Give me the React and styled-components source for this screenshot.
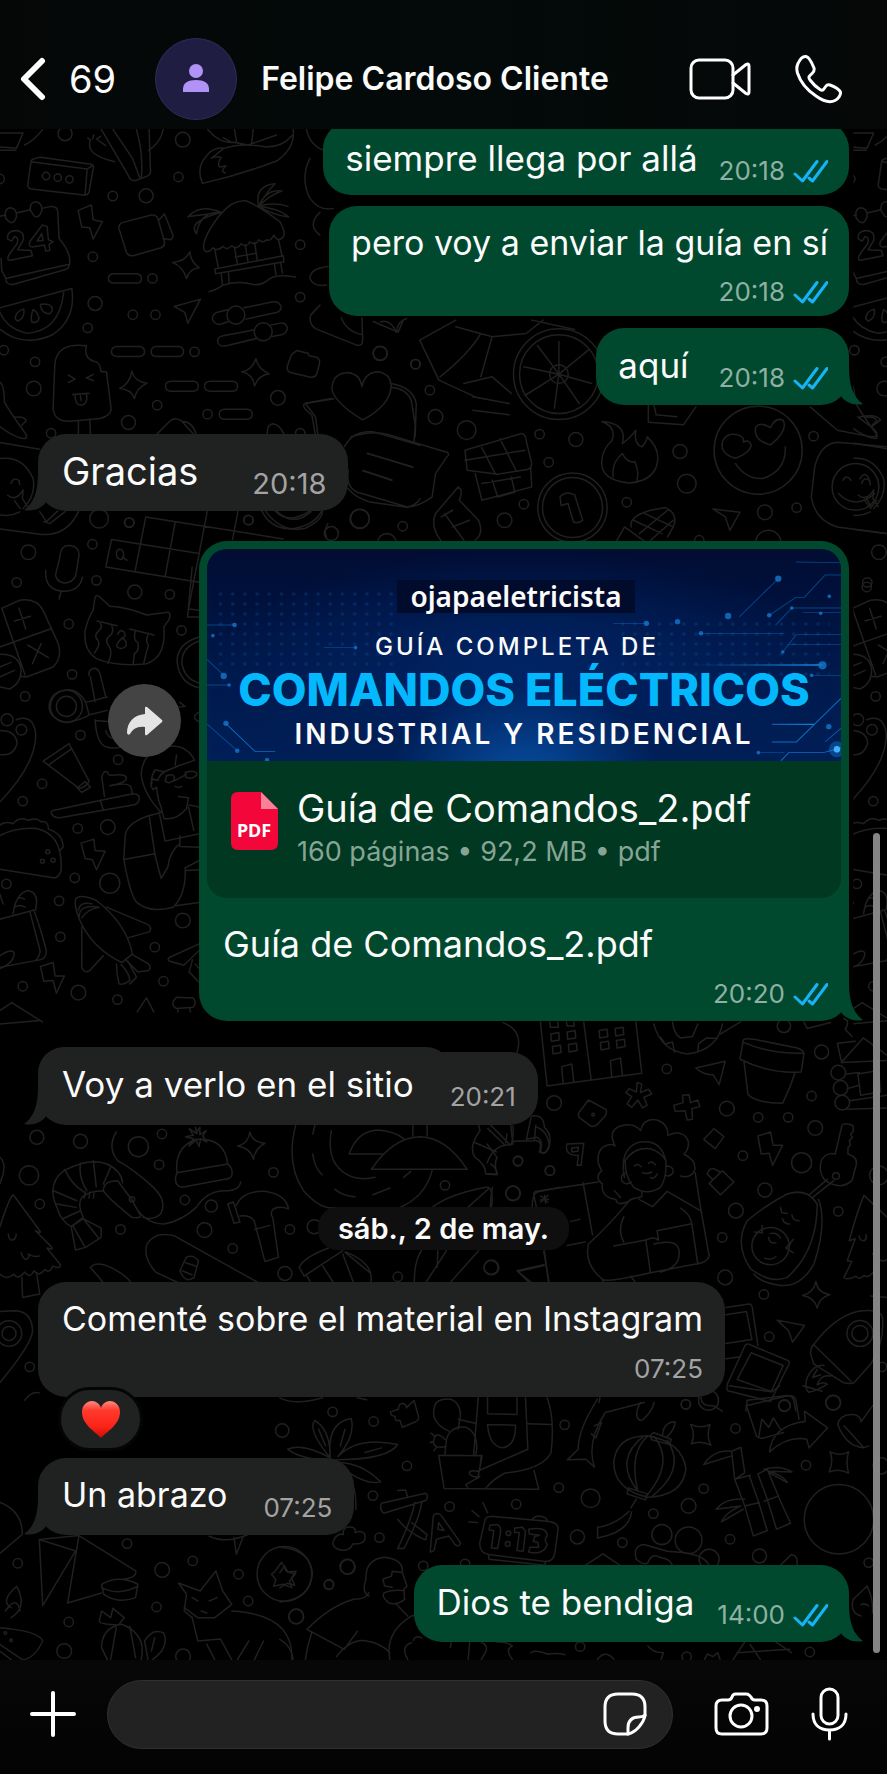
import React from "react";
import styled, { createGlobalStyle, css } from "styled-components";

const GlobalStyle = createGlobalStyle`
  * { box-sizing: border-box; }
  body { margin: 0; background: #000; }
  button, input { font: inherit; color: inherit; }
`;

const SENT = "#00492f";
const RECEIVED = "#202121";

const App_ = styled.div`
  min-height: 100vh;
  display: flex;
  flex-direction: column;
  background: #000;
  color: #fbfbfb;
  font-family: Inter, "Liberation Sans", sans-serif;
`;

/* ---------- header ---------- */
const Header = styled.header`
  height: 129px;
  padding: 29px 44px 0 20px;
  display: flex;
  align-items: center;
  background: linear-gradient(90deg, #050707, #030a09 50%, #060808);
`;
const IconButton = styled.button`
  display: flex;
  align-items: center;
  padding: 0;
  border: 0;
  background: none;
  cursor: pointer;
  flex: none;
`;
const BackButton = styled(IconButton)`
  gap: 23px;
  font-size: 38px;
  line-height: 44px;
`;
const Avatar = styled.div`
  flex: none;
  width: 82px;
  height: 82px;
  margin-left: 39px;
  border-radius: 50%;
  border: 1px solid #302b5a;
  background: #201d43;
`;
const ContactName = styled.h1`
  flex: 1;
  min-width: 0;
  margin: 0 0 0 24px;
  font-size: 32px;
  line-height: 40px;
  font-weight: 600;
  white-space: nowrap;
`;
const HeaderActions = styled.div`
  display: flex;
  align-items: center;
  gap: 43px;
`;

/* ---------- conversation ---------- */
const Chat = styled.main`
  position: relative;
  flex: 1;
  overflow: hidden;
  padding: 0 38px 18px;
  display: flex;
  flex-direction: column;
`;
const WallpaperSvg = styled.svg`
  position: absolute;
  inset: 0;
  width: 100%;
  height: 100%;
  fill: none;
  stroke: #20201f;
  stroke-width: 1.5px;
  stroke-linecap: round;
  stroke-linejoin: round;
  & path, & circle { vector-effect: non-scaling-stroke; }
`;
const Scrollbar = styled.div`
  position: absolute;
  right: 7px;
  top: 46%;
  bottom: 7px;
  width: 7px;
  border-radius: 4px;
  background: #858585;
`;
const Row = styled.div`
  position: relative;
  display: flex;
  align-items: flex-start;
  justify-content: ${(p) => (p.$sent ? "flex-end" : "flex-start")};
  margin-top: ${(p) => p.$top}px;
`;
const Bubble = styled.article`
  position: relative;
  display: flex;
  flex-direction: ${(p) => (p.$stacked ? "column" : "row")};
  gap: ${(p) => p.$gap}px;
  padding: ${(p) => (p.$raised ? 10 : 15)}px ${(p) => (p.$sent ? 21 : 22)}px ${(p) => p.$bottom || 13}px ${(p) => (p.$sent ? 22 : 24)}px;
  border-radius: 28px;
  background: ${(p) => (p.$sent ? SENT : RECEIVED)};
  ${(p) =>
    p.$raised &&
    css`
      &::before {
        content: "";
        position: absolute;
        left: 0;
        right: 86px;
        top: -5px;
        height: 52px;
        border-radius: 28px;
        background: ${RECEIVED};
      }
    `}
`;
const Text = styled.p`
  position: relative;
  margin: 0;
  padding-bottom: ${(p) => (p.$stacked ? 0 : 5)}px;
  font-size: ${(p) => p.$size || 35}px;
  line-height: 44px;
  white-space: nowrap;
`;
const Meta = styled.div`
  position: relative;
  align-self: flex-end;
  display: flex;
  align-items: center;
  gap: 8px;
  font-size: ${(p) => (p.$large ? 29 : 26)}px;
  line-height: 28px;
  color: ${(p) => (p.$sent ? "#8fb0a2" : "#a3a3a3")};
`;
const TailSvg = styled.svg`
  position: absolute;
  bottom: 0;
  ${(p) => (p.$sent ? "right: -14px;" : "left: -14px; transform: scaleX(-1);")}
  fill: ${(p) => (p.$sent ? SENT : RECEIVED)};
`;
const DateDivider = styled.div`
  position: relative;
  align-self: center;
  margin-top: 82px;
  padding: 0 20px;
  border-radius: 20px;
  background: #0f0f0f;
  font-size: 29px;
  line-height: 43px;
  font-weight: 600;
`;
const Reaction = styled.div`
  position: absolute;
  left: 20px;
  bottom: -54px;
  display: flex;
  align-items: center;
  justify-content: center;
  width: 85px;
  height: 64px;
  border: 3px solid #050505;
  border-radius: 32px;
  background: #202222;
`;

/* ---------- document card ---------- */
const ForwardButton = styled.button`
  flex: none;
  display: flex;
  align-items: center;
  justify-content: center;
  width: 73px;
  height: 73px;
  margin: 143px 18px 0 0;
  padding: 0;
  border: 0;
  border-radius: 50%;
  background: #444;
`;
const Card = styled.article`
  position: relative;
  flex: 0 1 650px;
  padding: 8px 8px 13px;
  border-radius: 28px;
  background: ${SENT};
`;
const Attachment = styled.a`
  display: block;
  overflow: hidden;
  border-radius: 20px;
  background: #003822;
  color: inherit;
  text-decoration: none;
`;
const Banner = styled.div`
  position: relative;
  display: flex;
  flex-direction: column;
  align-items: center;
  height: 212px;
  padding-top: 31px;
  background:
    radial-gradient(ellipse at 50% 110%, #0750a5 0, transparent 30%),
    radial-gradient(ellipse at 50% 55%, #022566 0, transparent 70%),
    linear-gradient(#010c32, #011a4c 60%, #012057);
  white-space: nowrap;
`;
const CircuitSvg = styled.svg`
  position: absolute;
  inset: 0;
  width: 100%;
  height: 100%;
`;
const Handle = styled.div`
  position: relative;
  margin-right: 16px;
  padding: 0 13px;
  background: #010b2b;
  font: 600 28px/33px "Noto Sans", "Open Sans", sans-serif;
`;
const Kicker = styled.div`
  position: relative;
  margin: 20px 14px 0 0;
  font-size: 24px;
  line-height: 28px;
  font-weight: 500;
  letter-spacing: 3px;
`;
const BannerTitle = styled.div`
  position: relative;
  margin-top: 7px;
  font-size: 45px;
  line-height: 44px;
  font-weight: 800;
  color: #04b8fd;
`;
const BannerSubtitle = styled.div`
  position: relative;
  margin-top: 7px;
  font-size: 28px;
  line-height: 30px;
  font-weight: 600;
  letter-spacing: 3px;
`;
const FileInfo = styled.div`
  display: flex;
  gap: 19px;
  height: 137px;
  padding: 25px 24px 0;
`;
const FileIcon = styled.svg`
  flex: none;
  margin-top: 6px;
`;
const FileName = styled.div`
  font-size: 38px;
  line-height: 44px;
  white-space: nowrap;
`;
const FileDetails = styled.div`
  margin-top: 6px;
  font-size: 27px;
  line-height: 32px;
  color: #86a595;
  white-space: nowrap;
`;
const Caption = styled.div`
  display: flex;
  flex-direction: column;
  gap: 14px;
  padding: 24px 13px 0 16px;
`;

/* ---------- composer ---------- */
const Composer = styled.form`
  display: flex;
  align-items: center;
  height: 115px;
  padding: 0 39px 7px 30px;
  background: linear-gradient(#070707, #030303);
`;
const Field = styled.div`
  flex: 1;
  min-width: 0;
  display: flex;
  align-items: center;
  height: 69px;
  margin: 0 41px 0 31px;
  padding: 0 25px 0 30px;
  border: 1px solid #303030;
  border-radius: 35px;
  background: #222;
`;
const MessageInput = styled.input`
  flex: 1;
  min-width: 0;
  height: 44px;
  border: 0;
  outline: 0;
  background: none;
  font-size: 34px;
`;
const ComposerActions = styled.div`
  display: flex;
  align-items: center;
  gap: 42px;
`;

/* ---------- small drawings ---------- */
const Line = ({ w, h, sw = 3, children, ...rest }) => (
  <svg width={w} height={h} viewBox={`0 0 ${w} ${h}`} fill="none" stroke="#fff" strokeWidth={sw}
    strokeLinecap="round" strokeLinejoin="round" aria-hidden="true" {...rest}>
    {children}
  </svg>
);

const Checks = () => (
  <Line w={35} h={24} stroke="#16b3f6" role="img" aria-label="Leído" aria-hidden={undefined}>
    <path d="M2 15L9.500 22L24 2.500M16 19L19.500 22L34 2.500" />
  </Line>
);

const Tail = ({ sent }) => (
  <TailSvg $sent={sent} width="25" height="38" viewBox="0 0 25 38" aria-hidden="true">
    <path d="M0 22L11 0C11 18 15 30 25 37C15 39 8 35 3.500 30Z" />
  </TailSvg>
);

const Message = ({ text, time, sent, top, gap, stacked, size, large, tail, bottom, raised, children }) => (
  <Row $sent={sent} $top={top}>
    <Bubble $sent={sent} $gap={gap} $stacked={stacked} $bottom={bottom} $raised={raised}>
      {tail && <Tail sent={sent} />}
      <Text $stacked={stacked} $size={size}>{text}</Text>
      <Meta $sent={sent} $large={large}>
        <time>{time}</time>
        {sent && <Checks />}
      </Meta>
      {children}
    </Bubble>
  </Row>
);

/* A patch of wallpaper doodles with its own origin and drawing scale. */
const Patch = ({ x, y, sx = 3, sy = 3, d, dots = [] }) => (
  <g>
    <path transform={`translate(${x} ${y}) scale(${1 / sx} ${1 / sy})`} d={d} />
    {dots.map(([cx, cy, r], i) => (
      <circle key={i} cx={x + cx / sx} cy={y + cy / sy} r={r / 3} />
    ))}
  </g>
);

const topLeft = {
  x: 0, y: 125,
  d: `M0 24L70 24L50 70L0 66M0 76L48 76M75 60Q105 45 128 14
  M94 110Q92 102 122 97L270 117Q284 120 280 132L268 200Q264 212 250 210L95 192Q82 189 84 178ZM94 110L262 132L280 120M262 132L256 210
  M305 14L385 150Q392 172 412 165L440 154Q454 150 452 138L448 14M340 14L398 100L420 158M410 14Q430 80 425 156M272 46Q255 90 345 110M272 46L264 38M278 42L282 30M290 42L302 34M290 42L318 62M446 76Q482 54 490 14
  M624 14Q660 56 700 52L745 60L830 30M880 14Q886 70 830 108Q720 150 608 175Q588 130 618 95Q640 65 672 70Q650 88 634 100Q650 92 664 98Q650 118 660 126L678 122Q660 140 676 144M672 70Q730 52 800 66Q850 64 876 32M670 38L695 52M710 50L704 14M760 14L755 58
  M0 274L18 270M50 264L92 254M126 250L155 244Q174 244 174 260L178 340Q212 380 210 410Q210 430 195 434L40 478Q18 480 18 460L6 436L4 400M18 460L205 418M18 280Q12 250 32 248Q52 250 50 276Q42 300 28 290ZM92 256Q90 230 108 230Q128 232 126 258Q118 280 104 274Z
  M24 342Q20 318 48 316Q76 318 70 346L54 374L94 376L98 392L28 406Q20 402 30 386L52 356Q58 336 44 334L36 348ZM128 300L90 350Q86 366 98 366L134 360L138 378L150 376L148 358L160 350L146 344L142 304ZM126 326L112 348L130 346Z
  M235 256L275 240L280 284L308 290L280 342L270 308L246 306Z
  M358 312Q354 298 370 292L455 270Q468 268 474 280L494 350Q496 362 484 368L400 392Q386 394 380 382ZM478 284L494 266L520 332L514 344L490 340
  M0 548L216 490Q230 580 160 628Q70 670 0 612M0 560Q20 610 80 624Q180 620 192 500M46 580Q50 556 72 552Q76 580 54 588ZM100 554Q90 580 98 592Q116 594 118 578Q110 556 100 554ZM122 538Q124 566 150 566Q166 552 150 540Q134 534 122 538Z
  M564 276Q600 235 664 262Q600 260 590 326Q560 290 664 262M566 274Q600 270 664 262M612 372Q606 340 660 270Q700 222 740 228Q780 244 840 290Q862 330 846 340Q830 350 822 330Q812 350 800 344Q790 356 776 344Q768 364 750 350Q740 370 724 356Q710 376 696 362Q680 378 670 364Q650 380 640 368Q620 390 612 372M776 244Q764 180 826 176Q800 200 776 244Q800 190 846 198Q810 210 776 244Q820 230 864 244M776 244Q840 250 866 276Q820 270 776 244
  M645 375L655 425M836 344L846 392M704 368L712 414M764 352L772 404M706 396L770 384M736 360L744 408M645 432L850 392L852 410L647 446ZM664 446L668 480M686 444L688 476M824 418L828 448M842 414L848 444M628 500Q650 494 670 480Q710 466 750 476Q780 486 808 462Q830 446 886 456
  M340 446L410 446Q425 448 425 460Q425 474 410 474L340 474Q326 472 326 460Q326 448 340 446ZM350 664L420 664Q434 666 434 680Q434 692 420 694L350 694Q335 692 335 680Q335 666 350 664ZM468 664L538 664Q551 666 551 680Q551 692 538 694L468 694Q454 692 454 680Q454 666 468 664ZM512 768L582 768Q595 770 595 783Q595 796 582 798L512 798Q497 796 497 783Q497 770 512 768ZM630 768L700 768Q713 770 713 783Q713 796 700 798L630 798Q614 796 614 783Q614 770 630 768ZM672 852L744 852Q757 854 757 867Q757 880 744 882L672 882Q658 880 658 867Q658 854 672 852Z
  M570 380Q572 410 598 428Q570 430 560 460Q550 425 518 412Q556 410 570 380ZM396 738Q404 770 442 774Q410 788 404 820Q394 792 360 790Q392 774 396 738ZM768 700Q774 732 808 746Q776 750 764 782Q758 746 726 740Q758 734 768 700Z
  M523 544L602 522L564 594L555 562ZM684 554L650 562Q636 570 638 584Q644 598 660 598L684 590M732 548L820 530Q838 528 844 546Q844 558 830 562L738 582M764 614L670 632Q650 636 654 652Q660 666 680 662L770 640M812 600L842 594Q858 592 862 608Q862 622 848 628L816 634
  M260 662Q170 650 165 720L160 850Q164 890 210 888L300 880Q334 872 334 850L320 740L304 740Q300 710 286 710Q250 700 260 662M236 888L236 928M270 884L272 928M206 750L226 762L206 772M280 748L260 758L280 766M218 808L268 804M226 808Q226 842 246 840Q266 834 260 806M242 812L244 826
  M862 724L874 690L890 676L924 684L928 692L950 696Q962 704 958 718L950 748Q944 758 932 756L872 742Q860 738 862 724Z
  M1088 884Q1000 830 996 790Q998 744 1044 742Q1080 746 1086 784Q1096 740 1136 740Q1170 746 1174 780Q1172 840 1088 884M996 820L916 834Q906 838 916 852L936 870L946 926M1174 786Q1220 790 1234 826L1246 900L1242 950M1034 964Q1060 914 1120 920L1260 960M1044 1090Q1070 1120 1110 1130L1220 1146Q1250 1140 1260 1120M1102 984L1238 1026M1090 1036L1176 1064
  M472 926L512 886Q528 874 546 888Q580 890 588 926M544 886L580 926M802 926Q802 896 820 896Q840 900 852 926M0 770Q14 780 14 830Q30 860 78 926Q84 938 76 940Q50 940 0 904M46 876Q72 872 80 886L66 900M0 952L120 972M0 1000Q70 990 100 1060Q110 1110 70 1150M0 1168Q30 1176 60 1160M34 1074Q40 1054 58 1066L60 1078M24 1110Q50 1130 70 1094L68 1120L84 1144M44 1126L62 1150
  M932 570L960 540M932 570Q926 600 950 612L1070 660Q1090 664 1088 640L1086 578M1024 578Q1040 620 1086 628M1142 590Q1170 580 1190 622Q1190 590 1220 580M920 14Q930 66 984 80M930 100Q900 160 930 220Q960 260 1000 250M960 262Q920 300 960 330M984 424Q930 430 930 460Q940 486 980 480`,
  dots: [[549,44,22],[536,156,14],[439,212,21],[339,213,14],[279,395,14],[286,535,21],[264,608,14],[399,569,14],[467,569,14],[458,460,14],[584,680,14],[106,710,14],[102,790,22],[12,675,14],[472,840,14],[386,892,21],[834,818,22],[623,867,14],[154,924,14],[901,359,14],[901,516,14],[1141,684,21],[1246,717,14],[901,924,14],[745,1184,14],[1080,1180,28],[389,1192,14],[298,1180,28],[196,26,21],[0,162,14],[139,153,11],[174,158,11],[209,163,11],[708,570,27],[790,620,27]],
};

const middleLeft = {
  x: 0, y: 510,
  d: `M0 56L120 72Q200 80 236 4M120 4L140 34L174 2M132 34L150 40L196 4
  M176 160L184 120Q192 104 212 106Q238 110 238 134L228 196Q216 220 192 218Q166 212 168 190ZM138 180Q134 240 190 243Q240 244 248 200M184 244L178 266
  M335 88L598 130M335 88L318 170L598 216M438 20L406 182M526 36L496 198M622 4L566 296L598 300M714 4L698 88M438 20L850 86M350 130Q350 114 366 118Q376 130 368 146Q350 150 350 130M368 140L382 150
  M786 2Q810 54 870 56Q940 50 966 2M826 2Q866 44 930 2M984 40Q970 60 980 80
  M286 260Q290 252 300 260L330 288Q380 290 440 314L505 306Q516 310 506 330L492 350Q500 440 440 460Q350 470 290 445Q250 420 256 360Q266 320 280 300ZM292 332L352 346M302 340Q310 350 298 360Q280 376 294 390Q304 400 284 428M336 346Q344 366 330 376Q312 390 328 408Q340 426 324 460M354 372Q360 356 372 364Q382 380 366 384Q348 400 352 410Q366 420 378 408Q384 390 366 384M390 356L462 374M406 362Q400 390 414 396Q420 420 404 430L400 462M444 374Q436 396 446 404Q438 430 432 458
  M6 294L60 270Q110 262 130 300L174 396Q190 440 160 470L80 500L64 498M6 294L76 494M0 410L152 356M44 332L92 318M58 294L78 356M84 404L146 442M124 400L98 460M0 432Q60 430 64 480Q64 520 30 536L0 530M0 470L34 456M0 500L44 480
  M148 590Q150 540 210 538Q240 542 258 576L322 560M266 614L322 600M258 576L268 614Q240 630 200 636Q150 626 148 590M268 496Q264 476 286 474Q298 476 302 496L318 560M272 500L286 574M286 628Q290 700 320 710Q350 718 380 704M286 630L330 634M318 660Q324 690 360 684M598 380Q530 400 532 456Q540 520 598 532M598 392Q546 410 546 456Q552 505 598 518M540 576L556 588L540 590M598 605Q570 620 598 634
  M0 660Q50 660 52 700Q40 740 0 732M0 875Q110 760 108 670Q100 610 50 628
  M130 752L208 700L268 812Q260 830 238 834L146 764ZM146 764L214 716M232 832L256 814L272 830L246 846ZM160 900L300 870L400 850Q420 850 418 866Q416 880 400 884L180 922Q158 922 154 906Q156 900 160 900M302 870L310 898M314 858L306 800Q310 780 322 784Q324 798 344 794Q380 790 380 804Q378 818 330 826Q390 814 394 832L398 850
  M584 750Q560 700 500 708Q430 720 424 790Q430 850 484 906M584 750L536 766Q520 774 492 784L466 778M530 734L526 764M496 784Q480 790 474 810L460 806Q446 820 460 838L470 830Q474 870 484 890L492 924Q530 930 560 894L566 862L536 858M522 812L560 792M500 796Q524 786 524 806Q510 824 496 812ZM556 786Q586 776 592 792Q576 810 558 800ZM526 828Q536 834 546 828M466 778Q452 800 456 820
  M484 906L446 916Q376 940 376 980L372 1046Q390 1150 410 1175Q450 1210 520 1190Q560 1150 556 1072L598 1050M376 1046L466 1030M448 916L466 1036L484 1104L504 1070Q510 1020 540 1000M478 906L496 992L598 970M540 976L540 1008L598 1010M566 890L582 960M528 1186L598 1176M568 884L598 890M560 1080L598 1078
  M0 975Q50 950 110 954Q190 970 184 1080Q176 1104 160 1102L0 1076M0 944Q16 930 40 940Q60 916 86 930Q110 920 124 934Q146 930 146 956Q190 970 190 1010L180 1020
  M244 998L282 986L286 1020L316 1022L290 1078L278 1048L256 1044ZM122 1368L160 1356L166 1396L194 1396L170 1448L160 1410L132 1412Z
  M0 1226L90 1202L102 1198Q128 1270 140 1322Q138 1346 120 1348L0 1370M90 1202L120 1316Q124 1330 108 1350M40 1210Q48 1150 84 1140Q114 1144 110 1180L108 1198M44 1190Q60 1180 76 1190M54 1164Q66 1158 74 1166M0 1150L10 1180M0 1336Q40 1310 44 1330Q40 1360 0 1374
  M250 1250Q220 1190 228 1164Q244 1150 290 1170Q380 1240 398 1330L366 1356Q290 1320 250 1250M238 1222Q236 1180 298 1190Q262 1196 246 1222M236 1200Q240 1172 276 1180M320 1190L440 1240Q460 1250 448 1264L384 1282M246 1250L246 1370Q252 1390 270 1380L310 1336M398 1332L446 1360Q456 1370 446 1380L414 1384L376 1346M364 1362Q390 1390 390 1410Q370 1424 358 1420Q350 1390 350 1360M384 1352L410 1400L390 1420
  M598 1300L510 1340Q500 1348 510 1352L552 1364L598 1320M578 1348L568 1384L598 1416M586 1360L620 1400L608 1420M0 1500L36 1476L128 1534M0 1540L120 1530M412 1504L440 1462L462 1504M530 1460L580 1462Q592 1476 580 1490L530 1494Q508 1480 530 1460M534 1494L534 1504M570 1494L572 1504M630 1504Q650 1460 690 1432M726 1452Q820 1410 914 1452M762 1502Q820 1460 876 1502M960 1432Q990 1450 990 1500`,
  dots: [[86,126,22],[278,102,14],[388,37,14],[290,210,14],[51,216,14],[405,245,21],[510,252,14],[207,341,14],[545,360,14],[217,492,14],[76,558,14],[242,674,14],[355,748,14],[127,820,14],[69,872,14],[234,954,14],[324,950,22],[225,1102,14],[330,1118,30],[178,1171,14],[20,1120,14],[182,1279,14],[465,1310,14],[549,1230,22],[236,1446,22],[69,1427,14],[353,1467,14],[491,1412,14],[200,588,30],[200,588,48],[22,628,18],[65,658,16],[144,1024,6],[128,1052,6],[160,1049,6]],
};

const lowerLeft = {
  x: 0, y: 1110, sx: 2.8,
  d: `M326 64Q300 110 330 150Q380 180 430 230Q470 270 450 310Q430 330 400 320M370 268Q400 340 460 340Q510 330 550 290Q580 240 630 240Q670 240 674 214
  M370 320Q300 260 290 240Q290 210 330 210L370 268L392 310Q400 324 370 320M160 290Q130 220 180 180Q250 140 300 160Q340 180 344 216M290 240Q250 240 230 260Q216 280 234 320L200 348Q170 330 160 290M182 176Q200 220 236 244M226 158Q220 200 244 240M262 150L270 228M310 170L290 220M150 240L216 270M160 280L214 290M176 324L226 300M200 348L212 418L240 410L284 380L284 352L234 324ZM204 344L238 408M234 324L278 384M240 244L236 262M252 244L250 262M264 248L262 262
  M38 252Q26 262 0 350M38 252L112 360Q118 370 100 360L146 410Q150 418 132 412L170 462Q170 476 148 466Q140 490 126 476Q110 500 96 480Q84 506 70 484Q50 510 40 490Q20 510 0 490M24 370Q26 390 36 388Q46 386 46 370M60 426Q66 446 74 446Q86 440 80 430Q96 440 110 436M62 500L64 560L112 550L104 492
  M496 186Q488 110 550 86Q630 80 638 160M496 186L638 160Q652 170 650 190Q650 204 630 206L510 230Q490 226 492 200ZM548 50L552 70L530 54L542 74L520 78L542 84L530 106L550 88L558 108L562 84L580 94L568 76L578 60L560 72L560 50L550 66Z
  M700 64Q706 94 742 98Q714 114 710 146Q704 114 666 106Q696 98 700 64ZM638 280L654 274L672 334L656 338ZM662 284Q680 240 740 242Q800 250 808 294Q780 284 764 296Q756 310 764 320L780 440L742 452L712 330Q700 312 672 316M714 356L756 344
  M828 44Q800 160 850 240Q900 300 940 290M882 44L876 70M876 130Q880 170 902 192M938 236Q960 256 994 258M1044 252L1092 232M928 60Q910 170 990 200Q1020 208 1050 200M1210 180Q1190 260 1116 292M978 130Q1000 60 1060 58Q1110 64 1130 84M978 130L1072 130M1040 176Q1100 80 1176 78Q1250 80 1308 176ZM1156 44L1156 76M1196 44L1196 76M1130 200L1150 182
  M1340 44L1344 60Q1310 110 1330 140Q1360 160 1360 190L1392 192Q1390 170 1374 160M1326 94L1390 124M1366 54L1414 104L1436 100L1430 44M1414 104Q1380 110 1364 156M1436 92L1496 90L1500 44M1500 90Q1520 90 1510 124Q1530 136 1538 100Q1530 60 1504 50
  M500 516L436 484Q400 440 412 400Q436 360 490 376L724 516M504 480L522 440Q540 430 556 450L544 500Q520 520 504 480M520 456L548 466M510 480L538 492M254 470Q270 450 310 470Q350 490 368 516M254 470L290 516
  M838 470Q850 440 920 412M838 470L852 496L960 420M860 496L870 516M904 466L934 516M960 430L990 516M970 424Q1050 460 1038 516M966 424L1036 486M1160 516Q1160 450 1180 420M1226 420L1224 470M1250 420L1192 516M1340 420L1260 516M1210 290Q1260 250 1360 230Q1384 226 1376 290M1310 290L1368 234M1490 290Q1490 250 1504 244L1568 230M1450 482L1524 464M1450 482L1482 516M1524 420L1536 516M1514 256L1534 274M1534 254L1514 274
  M0 816Q90 700 92 660Q90 600 40 600L0 602M0 140Q24 160 0 220M70 868Q90 840 110 846`,
  dots: [[104,80,21],[226,92,21],[388,108,30],[454,70,14],[446,162,14],[766,185,14],[518,268,14],[592,286,18],[652,413,14],[338,356,14],[573,358,22],[112,280,14],[82,194,29],[812,356,14],[798,488,21],[1114,498,14],[1246,224,14],[1376,470,22],[1436,248,21],[1450,152,14],[1540,180,14],[84,768,14],[26,668,21],[26,668,38],[370,266,8],[880,348,21]],
};

const lowerRight = {
  x: 487, y: 1010,
  d: `M160 34L180 226L464 188L446 34M290 34L312 206M188 34L190 50L214 50L212 34M238 34L240 46L262 46L260 34M191 70L215 66L217 88L193 92ZM240 64L264 60L266 82L242 86ZM196 108L220 104L222 126L198 130ZM244 102L268 98L270 120L246 124ZM336 60L360 56L362 78L338 82ZM384 54L408 50L410 72L386 76ZM340 96L364 92L366 114L342 118ZM388 90L412 86L414 108L390 112ZM228 220L224 168L254 160L260 214M374 200L370 150L400 142L406 194
  M500 40Q520 120 600 130Q690 120 706 40M556 34Q560 70 580 82L616 78L632 40M520 80L534 100L556 94L562 124M632 124L634 100L658 82L690 84M700 70L760 34M626 172L714 152L696 222L678 192Q650 194 626 172
  M768 90Q770 82 800 86L930 112Q952 120 950 130L942 184Q850 190 758 146ZM770 96Q850 130 948 128M770 150L782 250Q800 276 886 278Q910 230 924 184M950 34L960 54L1030 36M1070 24Q1090 30 1074 56L1094 78
  M1050 98L1104 92M1050 98L1062 150M1062 156L1128 82L1200 134M1062 156L1200 150M1076 190L1116 186M1080 234L1116 224M1086 270L1200 254M1112 190L1174 180L1180 244L1120 254ZM1080 296L1200 292
  M450 216L464 220L460 246L484 236L494 250L470 260L480 284L466 292L452 268L434 290L420 280L434 258L416 246L426 234L448 244ZM586 254L606 252L610 276L632 268L638 288L614 294L616 326L600 328L594 300L564 302L560 284L588 276Z
  M304 268L356 296Q362 306 352 318L330 342Q318 352 308 344L276 320Q270 310 280 300ZM680 354L710 378L684 414L650 386ZM666 518L706 480L740 514L700 552ZM676 506L660 490Q668 470 680 474L698 484M240 400L290 398L282 464L270 464L274 434Q240 436 238 412Q238 402 240 400M254 412L274 410L272 422L254 424Z
  M386 566Q340 560 346 520Q320 500 344 480Q320 440 346 410Q370 396 384 406Q360 360 400 346Q440 334 460 360Q470 320 510 328Q544 340 542 374Q590 354 604 394Q604 420 590 430Q630 450 622 480Q610 504 580 496M386 566Q390 586 420 574L440 562M382 540L400 560M412 500Q396 420 450 396Q520 380 536 450Q540 500 520 530Q480 556 440 530Q414 500 414 450Q440 408 490 414Q520 424 534 446M414 488Q400 490 404 510Q414 526 432 514M538 466Q560 466 558 486Q548 500 536 494M442 466Q450 456 462 468M484 458Q494 448 504 462M466 486Q480 492 494 484M490 500Q500 508 510 490
  M464 542L464 558L430 566Q370 640 304 700Q290 760 346 806Q360 816 490 786L626 760Q660 756 666 736L640 590L624 486M456 566L496 588L540 542L640 600M580 592Q610 610 614 640L632 760M410 618Q390 660 410 694M380 706L476 688L490 786M476 688Q500 676 514 688L510 660L610 640M500 700Q580 680 576 730Q576 770 520 784M140 550Q140 540 160 540L332 514M140 550L148 590M160 568L184 566M172 554L176 578M288 516L316 672M250 632L278 626M240 704L294 694M90 780L170 762M90 780L134 816M170 722L186 816M346 806L350 816M430 796L446 816
  M812 376L850 364L858 404L886 404L856 464L846 428L822 430ZM1064 344Q1074 334 1098 346L1098 362L1090 372L1096 380L1086 390L1090 402L1082 412L1082 430Q1114 440 1106 466L1094 510Q1060 540 1014 510Q990 480 1004 446Q1020 424 1044 430ZM1040 510L976 560M1020 506L966 552
  M900 550Q960 530 990 580Q990 720 900 800Q850 820 790 774Q740 700 780 630Q840 580 900 550M994 566Q1020 640 980 760Q940 830 880 824Q820 816 800 790M802 664L826 666L824 644M880 590L884 606L900 608M886 624Q890 640 908 640M914 612Q916 630 936 630M844 680Q846 700 866 696M850 668Q870 664 880 682M832 742Q850 750 866 738M918 686L896 712L918 726M896 712L910 700
  M1130 554Q1110 600 1086 690L1104 684Q1090 720 1080 750L1094 752L1070 800Q1080 810 1106 796Q1116 810 1130 794Q1144 804 1158 784M1130 554L1200 620M1116 676Q1116 690 1130 690Q1140 686 1136 672M1156 730Q1180 760 1200 746M1150 856L1200 860
  M986 812Q990 846 1028 852Q996 860 990 892Q982 860 946 854Q980 846 986 812ZM870 928L952 944L916 994L904 960ZM716 890L786 880Q794 880 796 894L812 1004M716 912L778 902L794 986L716 998M716 1044L760 1038
  M784 1000L904 1050Q910 1056 900 1070L850 1172L722 1140Q716 1130 722 1116L772 1008Q776 998 784 1000M792 1026L888 1064L852 1142L750 1106ZM776 1200L780 1168L900 1154Q916 1154 920 1170L926 1200
  M970 1030Q970 1010 980 1000Q1040 920 1110 902Q1190 890 1186 930Q1190 1000 1150 1060L1100 1116Q1090 1120 1070 1116L980 1060ZM980 1002L1092 1112M1010 1064Q980 1060 960 1100Q950 1130 964 1144Q990 1140 1020 1120Q1010 1110 990 1122Q1000 1090 1030 1096M990 1076L976 1100L1000 1092
  M48 36Q110 60 90 126M134 316Q170 310 172 350Q196 370 186 410Q170 440 160 420Q170 390 150 380L118 386L132 320M8 340L70 404Q80 390 78 346M60 370L56 396M0 400L30 440Q20 460 30 490L0 490M16 530Q10 560 10 590`,
  dots: [[539,175,14],[201,277,22],[719,294,22],[813,320,14],[903,320,14],[973,256,14],[984,352,22],[1003,124,21],[890,46,20],[767,435,14],[943,456,30],[833,538,21],[746,600,22],[705,680,14],[714,800,22],[830,851,14],[846,978,14],[1053,602,14],[188,480,14],[93,450,14],[78,548,22],[12,770,21],[1175,494,28],[1053,186,22],[1060,232,22],[1065,276,22],[1046,496,10],[596,1180,14],[1038,1176,22],[1118,968,24],[1118,968,39],[850,706,56],[318,312,4],[892,1184,17],[1184,1068,14],[664,1168,30]],
};

const bottomRight = {
  x: 280, y: 1385, sx: 2.583,
  d: `M286 78L306 70Q306 54 316 52Q328 56 326 66L346 44L358 92Q360 104 346 110L316 124L310 104Q294 106 298 92Q284 90 286 78
  M130 216Q70 130 90 104Q130 130 130 216Q120 110 184 98Q196 150 150 212Q200 150 304 176Q280 220 150 222Q60 226 20 190Q60 170 130 216M150 230Q210 230 260 288Q220 300 160 244M166 240Q200 300 196 370M100 130L118 180M168 130L156 180M220 200L262 186
  M436 136Q390 110 398 70Q400 36 440 40Q466 50 466 90L460 130M426 206L430 160Q440 120 480 124Q510 140 508 190L506 206M410 208L522 210L512 270M410 208L424 308L668 310L656 254M426 160Q400 130 396 170Q400 190 428 182M398 150L390 142M396 166L388 170M404 184L398 194M512 36L500 206M460 100L504 112M536 36L536 84L612 86L612 36M536 116L608 118Q610 180 574 186Q540 180 536 116M634 36L640 190L510 256Q486 250 490 266Q500 276 516 272L480 296L484 304M520 208L516 250M690 36Q710 100 700 200Q680 250 580 262Q550 280 532 306M640 114L700 116
  M820 40Q770 130 770 190L742 222L790 220L812 244Q790 170 840 80L940 50M824 50L826 36M930 50Q910 100 934 104Q960 80 966 50M812 120L830 110L816 156L804 144M1088 36Q1084 60 1120 60L1142 76
  M862 226Q870 150 950 150Q1040 170 1048 250Q1040 330 950 334Q860 310 862 226M950 150Q900 200 924 316M940 150Q860 220 924 316M966 152Q1020 230 946 330M1000 164Q1050 250 960 332M956 150L964 140L1010 160L1006 176L960 162ZM988 146Q990 110 1020 108Q1020 130 1000 152M900 306L948 324L944 342L896 324ZM920 340L906 366M902 376Q860 420 820 424L820 456Q900 440 908 378
  M1060 116Q1088 130 1110 116Q1100 150 1112 178Q1086 162 1062 174Q1074 146 1060 116M1420 198Q1446 212 1468 198Q1460 230 1468 262Q1444 246 1418 258Q1430 226 1420 198M1204 60L1310 30Q1330 28 1332 44L1340 100M1204 60L1230 150Q1236 160 1250 156L1300 140M1236 154L1244 100L1262 124L1274 96L1292 130M1264 198Q1270 120 1356 106L1354 76L1414 126L1366 186L1360 160Q1310 150 1264 198M1160 0L1270 18L1290 0M1350 0L1400 16
  M1440 116Q1446 84 1480 86Q1500 90 1500 108L1530 60M1440 116Q1460 180 1506 186L1520 180M1456 120Q1480 150 1506 184
  M1094 236Q1120 190 1166 196L1190 184L1200 260L1176 280M1166 196L1174 280L1200 360L1222 450L1258 434L1236 350L1212 270M1094 236L1166 210M1174 280L1214 268M1200 360L1238 350M1126 370Q1150 334 1200 340M1126 370L1190 360Q1150 380 1140 408L1196 370M1234 264L1258 250L1290 340L1318 412L1282 430L1258 340ZM1250 250Q1290 236 1322 258L1262 256M1262 260L1310 290Q1300 270 1262 256M1250 346L1288 330
  M262 352L376 322Q386 330 376 344L268 382Q256 372 262 352M304 314L324 312L330 334M348 350Q340 400 304 488L320 488Q360 400 366 350M304 400Q330 440 376 462L380 446L340 410M388 498L396 390Q404 376 416 388L466 470Q464 486 452 476L436 450L404 460L398 494ZM408 430L410 410L424 434Z
  M516 470L530 400Q534 390 552 392L690 406Q720 410 718 430L710 500Q706 530 680 526L540 506Q514 500 516 470M538 506L540 520L684 538L686 526M652 400Q660 386 676 392Q690 396 690 406M542 418L560 416Q570 420 570 436L562 488L546 486L552 434L540 432ZM606 426L626 424L634 436L628 496L612 494L618 440L606 440ZM642 430Q690 420 690 450Q680 460 690 476Q680 510 642 498L646 484L668 484L666 470L654 466L658 452L670 448L644 444ZM524 350L536 380M496 374L514 392M488 408L510 410
  M140 460Q150 440 164 446Q160 420 186 424Q196 426 194 440Q220 430 220 454Q220 476 188 474Q180 500 150 490Q130 480 140 460
  M786 540L834 504L880 540M920 520Q910 480 940 476L1000 496L1040 500Q1100 510 1108 540M920 520Q940 540 950 530Q960 500 980 514Q1010 520 1014 540M1290 540L1320 506Q1340 510 1334 540
  M222 580Q220 520 270 514Q320 520 316 560L290 556L288 570L266 580L270 600L290 604M316 560L328 600L320 610L322 640Q300 660 280 650Q260 630 270 620Q290 610 320 614M222 580Q210 620 230 630M230 620Q224 640 190 640Q130 660 70 730L166 790L200 736M300 654L330 690M66 820Q70 780 82 740M146 812Q180 760 220 764Q260 770 284 800M284 820Q270 740 340 690L358 684M330 820Q310 780 340 770M344 764Q350 746 366 756M490 768L486 820M442 768L440 784
  M520 768Q540 780 530 800L520 820M560 768Q590 768 600 780Q580 790 600 820M648 800Q660 790 690 804Q720 800 736 806M820 820Q840 790 862 820M950 780Q960 800 990 800L984 820M1096 820L1104 804L1118 812L1130 800L1136 820M1170 820L1200 768M1280 768L1320 800M1214 776L1240 820M1180 800L1316 790
  M1480 640L1516 600Q1532 640 1530 680M1480 640Q1470 680 1500 690M1500 656Q1510 650 1520 660
  M0 484Q76 490 84 560Q80 640 0 648M0 560L12 540L20 558L42 556L30 576L38 598L18 592L0 606M0 760Q30 780 34 820M0 36Q40 60 110 36M200 36L224 42`,
  dots: [[136,78,14],[242,107,14],[6,134,20],[328,240,14],[240,329,14],[438,362,14],[257,455,14],[610,355,14],[735,117,14],[720,305,14],[802,337,28],[768,453,21],[964,383,14],[884,470,14],[1055,360,22],[1094,308,14],[1048,56,14],[1176,128,14],[1428,50,22],[1358,238,14],[1162,460,14],[1238,510,21],[986,446,30],[1055,463,40],[1108,520,30],[174,542,22],[126,597,14],[42,692,22],[370,540,14],[478,534,14],[775,782,14],[1050,812,14],[1368,798,14],[1520,530,14],[1302,60,17],[1552,240,24],[1443,400,104],[590,442,7],[588,474,7]],
};

const upperRight = {
  x: 0, y: 320, sx: 1.768,
  d: `M742 60L806 0M742 60L776 180L840 230M836 230L900 250M806 20L870 50L850 170M820 190L870 170L904 220M836 270L900 284M778 170Q830 100 850 40M870 50L930 40L960 0M940 0L1016 28
  M988 162L988 64M988 162L1040 90M988 162L1046 190M988 162L1024 250M988 162L980 264M988 162L928 226M988 162L926 140M988 162L950 76
  M1146 256L1146 306L1208 314L1230 260M1156 256L1160 284L1196 290M660 4L704 36L712 4
  M620 350Q660 330 684 342L790 396Q796 402 790 410L770 460L764 530Q740 560 720 560L640 520Q610 510 616 450M650 400L730 440M642 452L692 480M690 190Q730 200 736 250L734 350M540 250L590 236M540 250L558 290L562 342
  M822 390L922 340Q930 344 930 360L940 430Q940 450 924 450L880 462L826 450ZM850 376L876 462M884 356L912 450M822 420L928 390M840 460L852 540L940 500L938 440M852 490L920 470M870 480L880 530L910 516L904 470
  M1064 304Q1110 310 1100 370Q1116 350 1124 330Q1120 370 1134 380Q1142 370 1144 350Q1170 390 1160 440Q1150 484 1112 488Q1060 480 1064 420Q1064 390 1082 360Q1090 320 1064 304M1084 470Q1080 430 1100 400Q1110 430 1122 424Q1130 450 1126 480
  M1300 414Q1270 400 1278 360Q1286 336 1304 344Q1316 350 1314 366Q1324 356 1328 376Q1324 400 1300 414M1362 374Q1330 360 1336 320Q1344 304 1362 322Q1370 290 1384 300Q1394 330 1362 374M1300 430Q1320 480 1350 474Q1390 450 1388 380
  M1568 380L1480 366Q1450 370 1440 440L1434 530Q1440 600 1480 620L1568 640M1490 480Q1496 460 1504 480M1520 476Q1528 450 1536 476M1482 520Q1510 570 1546 520M1530 530L1540 560L1550 540M1432 260L1480 330L1540 350Q1560 350 1540 320L1516 290M1520 290Q1550 280 1556 300L1540 320
  M990 530Q1000 510 1016 524L1030 600Q1024 610 1014 606L1004 550L992 556ZM1260 566L1308 576L1290 630L1282 590ZM770 580L810 500Q820 510 812 540L846 600Q856 640 840 660M770 580Q760 620 780 662M780 590L800 570M800 620L830 600M786 580L820 660
  M1090 662L1104 620L1140 664M1116 620Q1110 590 1150 570L1176 562Q1200 580 1190 620L1180 650M1120 600L1170 640M1140 580L1190 620M1180 570L1130 640M1190 600L1150 660M470 574Q500 640 540 624Q570 600 570 574M490 574Q520 620 550 574M340 740L332 890L352 890`,
  dots: [[672,100,21],[735,132,14],[770,290,22],[825,330,28],[760,210,14],[954,342,14],[1018,358,21],[970,426,14],[1202,394,21],[1438,348,14],[1214,490,28],[1108,546,14],[1352,576,22],[1408,562,14],[926,552,14],[892,600,22],[636,596,29],[586,640,21],[712,618,14],[440,600,14],[1510,90,14],[1532,800,14],[988,162,136],[988,162,118],[988,162,28],[1012,562,90],[1012,562,104],[1340,390,132],[1512,500,70],[1236,660,14],[684,668,28],[1358,668,38],[1456,150,40]],
};

const Wallpaper = () => (
  <WallpaperSvg viewBox="0 129 887 1530" preserveAspectRatio="xMidYMin slice" aria-hidden="true">
    <g id="doodle-edge">
      <Patch {...topLeft} />
      <Patch {...middleLeft} />
    </g>
    <svg x="853" y="0" width="34" height="1040" viewBox="3 0 34 1040"><use href="#doodle-edge" /></svg>
    <Patch {...lowerLeft} />
    <Patch {...lowerRight} />
    <Patch {...bottomRight} />
    <Patch {...upperRight} />
    <Patch x={0} y={1500} sx={1.768}
      d={`M70 116L134 150L76 314ZM70 116L140 104L120 306L180 276M140 104L240 210Q244 230 216 236M180 250Q210 220 244 250L240 290Q210 310 184 280ZM180 260Q210 286 244 256
        M316 246L330 280L326 330L340 350M316 246L354 270L382 210L394 270L410 310L380 350L350 350L326 320M340 290L350 300M370 300L384 290M356 330L366 336M340 350L350 420L390 414L410 476M410 330Q520 340 516 476M420 476L440 420M450 476L466 420M366 430L380 476
        M486 212L498 184L506 210L522 220L512 240L516 260L500 250L484 256L488 236L480 220Z
        M20 320Q0 300 30 256Q50 320 20 350M10 330Q30 280 36 330M0 380Q70 390 76 420Q60 476 40 476M0 430L40 476M0 450L20 476M176 360L180 330L196 350L200 322L220 350L210 372Q176 370 176 360M180 440Q180 380 216 370Q260 400 250 476M206 380L196 476M230 376L240 470M180 440L190 476M262 476L256 420Q270 380 290 396Q300 440 270 476M274 410L268 450
        M0 4Q40 30 40 100L0 158M370 106Q400 130 440 100M414 110L418 160L430 108`}
      dots={[[32,187,14],[225,128,14],[341,180,14],[287,207,22],[422,220,14],[439,300,14],[277,318,14],[122,363,14],[114,450,22],[324,466,22],[524,346,22],[582,250,14],[615,198,22],[503,219,82],[10,396,4],[20,418,4]]} />
  </WallpaperSvg>
);

const Circuit = () => (
  <CircuitSvg viewBox="61 87 1404 636" preserveAspectRatio="none" aria-hidden="true">
    <defs>
      <pattern id="dot-grid" width="27" height="30" patternUnits="userSpaceOnUse">
        <ellipse cx="10" cy="12" rx="4" ry="5" fill="#0b4a92" opacity=".35" />
      </pattern>
      <linearGradient id="beam"><stop offset="0" stopColor="#0a6fc4" stopOpacity="0" /><stop offset="1" stopColor="#168be0" /></linearGradient>
    </defs>
    <rect x="70" y="215" width="420" height="240" fill="url(#dot-grid)" />
    <rect x="960" y="290" width="480" height="180" fill="url(#dot-grid)" />
    <g fill="none" stroke="#0868b8" strokeWidth="2.5">
      <path d="M1240 290L1326 176M1465 165L1430 165L1384 232L1365 232L1306 286M1465 264L1356 264L1320 316M1365 126L1465 128M1465 344L1366 344L1336 396M1465 373L1346 373M1380 278L1465 278M1465 466L1400 466M1150 340L1340 340M960 310L1030 310M61 315L122 315M320 383L390 383M61 418L98 466M61 495L110 495M61 612L128 692M1465 655L1490 600M1282 698L1340 698" opacity=".6" />
      <path d="M1465 535L1366 666L1312 666M1465 684L1428 697L1350 697L1332 722M102 610L168 695L212 695" stroke="#0a84dc" opacity=".8" />
      <path d="M1430 665L1465 625" opacity=".8" />
    </g>
    <path d="M1130 433H1424V437H1130ZM1312 611H1405V615H1312Z" fill="url(#beam)" />
    <g fill="#1379cd" opacity=".8">
      {[[1326,176,7],[1306,286,5],[1356,264,4],[1439,229,4],[1215,288,7],[1103,305,6],[1034,310,6],[1155,340,5],[1420,280,4],[1336,396,4],[1424,436,9],[122,315,5],[74,347,4],[390,383,4],[98,468,7],[110,495,4],[128,692,5],[103,610,6],[194,720,5],[1282,698,4],[1438,620,6],[1400,466,4]].map(([x, y, r], i) => (
        <ellipse key={i} cx={x} cy={y} rx={r} ry={r * 1.35} />
      ))}
    </g>
    <ellipse cx="1456" cy="688" rx="18" ry="24" fill="#1a8cf0" opacity=".35" />
    <ellipse cx="1456" cy="688" rx="7" ry="10" fill="#3fb2ff" />
  </CircuitSvg>
);

export default function App() {
  return (
    <App_>
      <GlobalStyle />
      <Header>
        <BackButton type="button" aria-label="Volver, 69 chats">
          <Line w={26} h={44} sw={6}><path d="M22 4L4 22L22 40" /></Line>
          <span>69</span>
        </BackButton>
        <Avatar>
          <svg width="80" height="80" viewBox="0 0 80 80" fill="#b192f6" aria-hidden="true">
            <circle cx="40" cy="32" r="7" />
            <path d="M27 53V50C27 44 32 41 40 41S53 44 53 50V53Z" />
          </svg>
        </Avatar>
        <ContactName>Felipe Cardoso Cliente</ContactName>
        <HeaderActions>
          <IconButton type="button" aria-label="Videollamada">
            <Line w={62} h={42}>
              <rect x="2" y="2" width="42" height="38" rx="8" />
              <path d="M44 17L57 6.500Q60 5 60 8V34Q60 37 57 35.500L44 25" />
            </Line>
          </IconButton>
          <IconButton type="button" aria-label="Llamar">
            <Line w={49} h={50}>
              <path d="M4 9.500C6 5 9 2 12 2.500C15 3 18 9 20 14C20.500 16 20 17.500 18.500 19L15.500 22C14.500 23 15 24.500 16 26C19 30 22 33 26 35.500C27.500 36.500 28.500 36.500 29.500 35.500L32 32C33 30.500 34.500 30.500 36 31C40 32.500 45 35 46.500 38C47 41 44 45 41 46.500C36 49 29 47 22 42C13 36 6 27 3.500 19C2.500 15.500 2.500 12.500 4 9.500Z" />
            </Line>
          </IconButton>
        </HeaderActions>
      </Header>

      <Chat>
        <Wallpaper />
        <Message sent text="siempre llega por allá" time="20:18" top={-8} gap={21} bottom={10} />
        <Message sent stacked size={34} text="pero voy a enviar la guía en sí" time="20:18" top={11} gap={13} bottom={10} />
        <Message sent tail text="aquí" time="20:18" top={12} gap={30} />
        <Message tail large size={38} text="Gracias" time="20:18" top={29} gap={54} />

        <Row $sent $top={30}>
          <ForwardButton type="button" aria-label="Reenviar">
            <svg width="36" height="30" viewBox="0 0 36 30" fill="#e4e4e4" aria-hidden="true">
              <path d="M18 2Q18 0 20 1L35 14Q36 15 35 16L20 29Q18 30 18 28V21C10 20 6 23 3 28Q1 30 0 27C0 16 7 9 18 8Z" />
            </svg>
          </ForwardButton>
          <Card>
            <Tail sent />
            <Attachment href="#documento">
              <Banner>
                <Circuit />
                <Handle>ojapaeletricista</Handle>
                <Kicker>GUÍA COMPLETA DE</Kicker>
                <BannerTitle>COMANDOS ELÉCTRICOS</BannerTitle>
                <BannerSubtitle>INDUSTRIAL Y RESIDENCIAL</BannerSubtitle>
              </Banner>
              <FileInfo>
                <FileIcon width="47" height="58" viewBox="0 0 47 58">
                  <path d="M7 0H30L47 17V51Q47 58 40 58H7Q0 58 0 51V7Q0 0 7 0Z" fill="#f3063a" />
                  <path d="M30 0L47 17H30Z" fill="#fa8196" />
                  <text x="23" y="45" textAnchor="middle" fontSize="18" fontWeight="700" fontFamily="Noto Sans, sans-serif" fill="#fff">PDF</text>
                </FileIcon>
                <div>
                  <FileName>Guía de Comandos_2.pdf</FileName>
                  <FileDetails>160 páginas • 92,2 MB • pdf</FileDetails>
                </div>
              </FileInfo>
            </Attachment>
            <Caption>
              <Text $stacked $size={36}>Guía de Comandos_2.pdf</Text>
              <Meta $sent><time>20:20</time><Checks /></Meta>
            </Caption>
          </Card>
        </Row>

        <Message tail raised text="Voy a verlo en el sitio" time="20:21" top={31} gap={36} bottom={14} />
        <DateDivider>sáb., 2 de may.</DateDivider>
        <Message stacked size={34} text="Comenté sobre el material en Instagram" time="07:25" top={32} gap={14} bottom={14}>
          <Reaction>
            <svg width="38" height="37" viewBox="0 0 38 37" role="img" aria-label="Corazón rojo">
              <defs>
                <linearGradient id="heart" x1="0" y1="0" x2="0" y2="1">
                  <stop offset="0" stopColor="#ff8a80" />
                  <stop offset=".25" stopColor="#ff3a2c" />
                  <stop offset=".7" stopColor="#fb2318" />
                  <stop offset="1" stopColor="#c80d06" />
                </linearGradient>
              </defs>
              <path d="M19 37C14 31 0 24 0 11C0 4 5 0 10 0C14 0 18 3 19 7C20 3 24 0 28 0C33 0 38 4 38 11C38 24 24 31 19 37Z" fill="url(#heart)" />
            </svg>
          </Reaction>
        </Message>
        <Message tail size={34} text="Un abrazo" time="07:25" top={61} gap={36} />
        <Message sent tail text="Dios te bendiga" time="14:00" top={30} gap={23} />
        <Scrollbar />
      </Chat>

      <Composer onSubmit={(e) => e.preventDefault()}>
        <IconButton type="button" aria-label="Adjuntar">
          <Line w={46} h={46} sw={4}><path d="M23 2V44M2 23H44" /></Line>
        </IconButton>
        <Field>
          <MessageInput type="text" aria-label="Mensaje" />
          <IconButton type="button" aria-label="Stickers">
            <Line w={44} h={44}>
              <path d="M15 2H29Q42 2 42 15V24C40 32 33 40 25 42H15Q2 42 2 29V15Q2 2 15 2Z" />
              <path d="M25 42V36Q25 25 36 25Q40 25 42 23" />
            </Line>
          </IconButton>
        </Field>
        <ComposerActions>
          <IconButton type="button" aria-label="Cámara">
            <Line w={55} h={44}>
              <path d="M8 8H14Q17 8 18 5L19 3Q20 2 22 2H32Q34 2 35 3L37 5Q38 8 41 8H47Q53 8 53 14V36Q53 42 47 42H8Q2 42 2 36V14Q2 8 8 8Z" />
              <circle cx="27" cy="24" r="11" />
              <circle cx="43" cy="17" r="1.500" fill="#fff" />
            </Line>
          </IconButton>
          <IconButton type="button" aria-label="Grabar audio">
            <Line w={37} h={54}>
              <rect x="10" y="2" width="17" height="35" rx="8.500" />
              <path d="M2 27C2 38 9 43 18.500 43S35 38 35 27M18.500 43V52" />
            </Line>
          </IconButton>
        </ComposerActions>
      </Composer>
    </App_>
  );
}
